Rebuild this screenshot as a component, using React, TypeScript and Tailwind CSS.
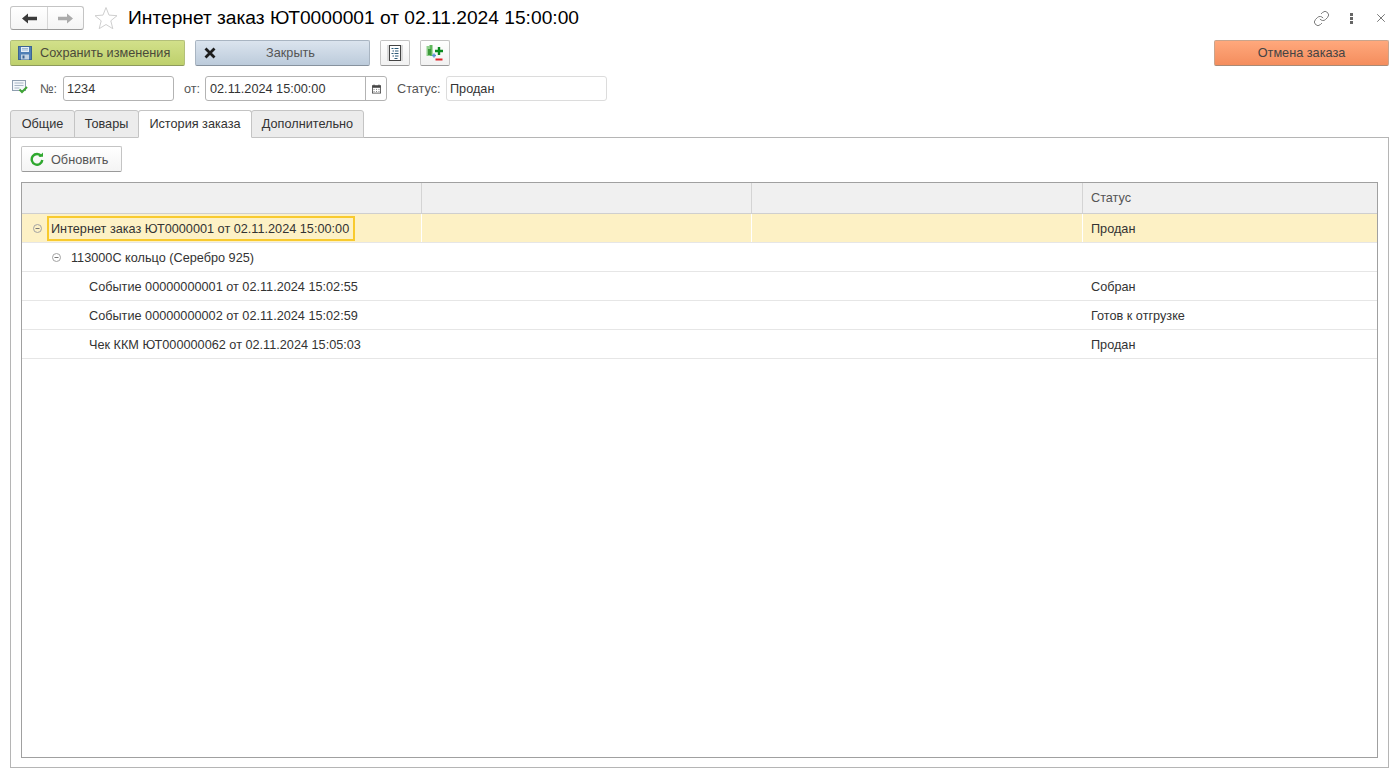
import { Link, X } from 'lucide-react'

const rows = [
  { text: 'Интернет заказ ЮТ0000001 от 02.11.2024 15:00:00', status: 'Продан', level: 0, toggle: true, active: true },
  { text: '113000С кольцо (Серебро 925)', status: '', level: 1, toggle: true, active: false },
  { text: 'Событие 00000000001 от 02.11.2024 15:02:55', status: 'Собран', level: 2, toggle: false, active: false },
  { text: 'Событие 00000000002 от 02.11.2024 15:02:59', status: 'Готов к отгрузке', level: 2, toggle: false, active: false },
  { text: 'Чек ККМ ЮТ000000062 от 02.11.2024 15:05:03', status: 'Продан', level: 2, toggle: false, active: false },
]

const tabs = ['Общие', 'Товары', 'История заказа', 'Дополнительно']
const tabWidths = ['w-[65px]', 'w-[65px]', 'w-[114px]', 'w-[113px]']

function Toggle() {
  return (
    <svg width="9" height="9" viewBox="0 0 9 9" className="shrink-0">
      <circle cx="4.5" cy="4.5" r="4" fill="none" stroke="#a3a3a3" />
      <path d="M2.5 4.5h4" stroke="#777" />
    </svg>
  )
}

function NavArrow({ color, flip }: { color: string; flip?: boolean }) {
  return (
    <svg width="15" height="11" viewBox="0 0 15 11" className={flip ? 'rotate-180' : ''}>
      <path d="M0 5.500L6 0.500V3.800H15V7.200H6V10.500z" fill={color} />
    </svg>
  )
}

function SaveIcon() {
  return (
    <svg width="14" height="14" viewBox="0 0 14 14" className="shrink-0">
      <rect x="0.5" y="0.5" width="13" height="13" fill="#4f7fb5" stroke="#3c6492" />
      <rect x="3" y="1" width="8" height="5" fill="#e6eef6" />
      <path d="M4 2.500h6M4 4h6" stroke="#9db8d3" />
      <rect x="3" y="8.5" width="8" height="5" fill="#c4d3e2" />
      <rect x="4.5" y="9.5" width="2" height="3" fill="#3c6492" />
    </svg>
  )
}

function CloseIcon() {
  return (
    <svg width="12" height="12" viewBox="0 0 12 12" className="shrink-0">
      <path d="M1.5 1.5l9 9M10.5 1.5l-9 9" stroke="#1c1c1c" strokeWidth="2.800" />
    </svg>
  )
}

function StarIcon() {
  return (
    <svg width="24" height="24" viewBox="0 0 24 24">
      <path d="M12 1.5l3 7.6 8 .6-6.200 5.100 2 7.900L12 18.500l-6.800 4.200 2-7.900L1 9.700l8-.6z" fill="none" stroke="#cfcfcf" />
    </svg>
  )
}

function DocIcon() {
  return (
    <svg width="16" height="18" viewBox="0 0 16 18">
      <rect x="0" y="1" width="16" height="16" fill="#d9d9d9" />
      <rect x="2.500" y="1.500" width="11" height="15" fill="#fff" stroke="#444" />
      <path d="M4.500 4.500h2M7.500 4.500h4M5.500 7h1.500M8 7h3.500M4.500 9.500h2M7.500 9.500h4M5.500 12h1.500M8 12h3.500M7.500 14.500h3" stroke="#2c5a78" />
    </svg>
  )
}

function MovementIcon() {
  return (
    <svg width="18" height="18" viewBox="0 0 18 18">
      <rect x="0.500" y="2" width="3" height="10" fill="#8fd08c" />
      <rect x="3.500" y="1" width="3" height="11" fill="#5fb85c" />
      <rect x="2" y="5" width="3" height="6" fill="#3d9a3a" />
      <path d="M6 11.500h4M8 9.500v4" stroke="#5b8fd0" strokeWidth="1.500" />
      <path d="M9 7h8M13 3v8" stroke="#0b8a1e" strokeWidth="2.400" />
      <path d="M9.500 15.500h7" stroke="#e0242a" strokeWidth="2" />
    </svg>
  )
}

function PostedIcon() {
  return (
    <svg width="16" height="14" viewBox="0 0 16 14">
      <rect x="0.500" y="0.500" width="13" height="10" fill="#f4f7fb" stroke="#8f9eb0" />
      <path d="M2.500 3h9M2.500 5.500h9M2.500 8h5" stroke="#a9b6c5" />
      <path d="M7.500 9.500l2.500 2.500 5-5" fill="none" stroke="#3fa535" strokeWidth="2" />
    </svg>
  )
}

function CalendarIcon() {
  return (
    <svg width="9" height="10" viewBox="0 0 11 11">
      <rect x="0.500" y="1.500" width="10" height="9" fill="none" stroke="#444" />
      <rect x="0.500" y="1.500" width="10" height="2.500" fill="#444" />
      <path d="M2.500 0v2M8.500 0v2" stroke="#444" />
      <path d="M2 6h1M5 6h1M8 6h1M2 8.500h1M5 8.500h1M8 8.500h1" stroke="#444" />
    </svg>
  )
}

function RefreshIcon() {
  return (
    <svg width="14" height="14" viewBox="0 0 14 14">
      <path d="M11.300 4.200A5.300 5.300 0 1 0 12.300 8" fill="none" stroke="#2fa82f" strokeWidth="2.400" />
      <path d="M8.500 4.800h4.500V0.500z" fill="#2fa82f" />
    </svg>
  )
}

export default function App() {
  return (
    <div className="w-[1397px] h-[776px] bg-white overflow-hidden flex flex-col pl-[10px] pr-[8px] pt-[6px] text-[12.7px] text-[#333] font-['Liberation_Sans',Arial,sans-serif]">
      <div className="h-[24px] flex items-center shrink-0">
        <div className="w-[74px] h-[24px] flex bg-gradient-to-b from-white to-[#f4f4f4] border border-[#c4c4c4] border-b-[#9a9a9a] rounded-[3px]">
          <div className="w-[37px] flex items-center justify-center border-r border-[#d6d6d6]">
            <NavArrow color="#3a3a3a" />
          </div>
          <div className="flex-1 flex items-center justify-center">
            <NavArrow color="#ababab" flip />
          </div>
        </div>
        <div className="ml-[10px] mr-[10px]">
          <StarIcon />
        </div>
        <div className="text-[19.2px] leading-[24px] text-black whitespace-nowrap">Интернет заказ ЮТ0000001 от 02.11.2024 15:00:00</div>
        <div className="ml-auto flex items-center text-[#666]">
          <Link size={17} strokeWidth={1.200} />
          <div className="ml-[20px] flex flex-col gap-[1px]">
            <div className="w-[3px] h-[3px] bg-[#666]"></div>
            <div className="w-[3px] h-[3px] bg-[#666]"></div>
            <div className="w-[3px] h-[3px] bg-[#666]"></div>
          </div>
          <X size={14} strokeWidth={1.500} className="ml-[21px] mr-[1px]" />
        </div>
      </div>

      <div className="mt-[10px] h-[26px] flex items-stretch shrink-0">
        <button className="w-[175px] flex items-center pl-[7px] gap-[8px] rounded-[2px] border border-[#b3c07a] border-b-[#8d9a5c] bg-gradient-to-b from-[#d2e08a] to-[#bed06c] text-[#4a4a3a]">
          <SaveIcon />
          <span className="pt-[2px]">Сохранить изменения</span>
        </button>
        <button className="ml-[10px] w-[175px] relative flex items-center justify-center pl-[16px] rounded-[2px] border border-[#a9b5c2] border-b-[#87929e] bg-gradient-to-b from-[#dbe4ee] to-[#bccbdb] text-[#555]">
          <span className="absolute left-[8px] top-[6px]">
            <CloseIcon />
          </span>
          <span className="pt-[2px]">Закрыть</span>
        </button>
        <button className="ml-[10px] w-[30px] flex items-center justify-center rounded-[2px] border border-[#c4c4c4] border-b-[#9a9a9a] bg-gradient-to-b from-white to-[#f1f1f1]">
          <DocIcon />
        </button>
        <button className="ml-[10px] w-[30px] flex items-center justify-center rounded-[2px] border border-[#c4c4c4] border-b-[#9a9a9a] bg-gradient-to-b from-white to-[#f1f1f1]">
          <MovementIcon />
        </button>
        <button className="ml-auto w-[175px] pt-[2px] flex items-center justify-center rounded-[2px] border border-[#c9a48c] border-b-[#a98a76] bg-gradient-to-b from-[#ffa87c] to-[#f48d5d] text-[#444]">
          Отмена заказа
        </button>
      </div>

      <div className="mt-[10px] h-[25px] flex items-center shrink-0">
        <div className="w-[30px] pl-[2px] -mt-[4px]">
          <PostedIcon />
        </div>
        <span className="text-[#555] w-[23px] pt-[2px]">№:</span>
        <div className="w-[111px] h-[25px] flex items-center px-[3px] pt-[2px] border border-[#b3b3b3] rounded-[3px]">1234</div>
        <span className="ml-[10px] w-[21px] pt-[2px] text-[#555]">от:</span>
        <div className="w-[182px] h-[25px] flex items-center border border-[#b3b3b3] rounded-[3px]">
          <span className="flex-1 px-[4px] pt-[2px]">02.11.2024 15:00:00</span>
          <span className="w-[21px] h-full flex items-center justify-center border-l border-[#b3b3b3]">
            <CalendarIcon />
          </span>
        </div>
        <span className="ml-[10px] w-[49px] pt-[2px] text-[#555]">Статус:</span>
        <div className="w-[161px] h-[25px] flex items-center px-[3px] pt-[2px] border border-[#dcdcdc] rounded-[3px]">Продан</div>
      </div>

      <div className="mt-[9px] h-[28px] flex items-stretch shrink-0 relative z-10">
        {tabs.map((t, i) => (
          <div
            key={t}
            className={`${tabWidths[i]} pt-[2px] flex items-center justify-center rounded-t-[3px] border border-[#c4c4c4] -mr-[1px] ${
              i === 2 ? 'bg-white border-b-white z-10' : 'bg-[#ececec]'
            }`}
          >
            {t}
          </div>
        ))}
      </div>

      <div className="-mt-[1px] w-[1379px] h-[631px] shrink-0 border border-[#b5b5b5] px-[10px] pt-[8px] flex flex-col">
        <button className="w-[101px] h-[26px] shrink-0 flex items-center pl-[8px] gap-[7px] rounded-[2px] border border-[#c4c4c4] border-b-[#9a9a9a] bg-gradient-to-b from-white to-[#f4f4f4] text-[#555]">
          <RefreshIcon />
          <span className="pt-[3px]">Обновить</span>
        </button>

        <div className="mt-[10px] w-[1357px] h-[576px] border border-[#a0a0a0]">
          <div className="h-[31px] flex bg-[#f0f0f0] border-b border-[#cfcfcf]">
            <div className="w-[400px] border-r border-[#d4d4d4]"></div>
            <div className="w-[330px] border-r border-[#d4d4d4]"></div>
            <div className="w-[331px] border-r border-[#d4d4d4]"></div>
            <div className="flex-1 flex items-center pl-[8px] pt-[2px] text-[#555]">Статус</div>
          </div>
          {rows.map(r => (
            <div
              key={r.text}
              className={`h-[29px] flex border-b border-[#e6e6e6] ${r.active ? 'bg-[#fdf1c5]' : 'bg-white'}`}
            >
              <div className={`w-[400px] flex items-center ${r.active ? 'border-r border-white pl-[11px]' : ''} ${r.level === 1 ? 'pl-[30px]' : ''} ${r.level === 2 ? 'pl-[67px]' : ''}`}>
                {r.toggle && <Toggle />}
                {r.active ? (
                  <span className="ml-[5px] h-[25px] w-[308px] flex items-center pl-[2px] pt-[3px] border-2 border-[#f8ca2e] whitespace-nowrap">{r.text}</span>
                ) : (
                  <span className={`whitespace-nowrap pt-[3px] ${r.toggle ? 'ml-[10px]' : ''}`}>{r.text}</span>
                )}
              </div>
              <div className={`w-[330px] ${r.active ? 'border-r border-white' : ''}`}></div>
              <div className={`w-[331px] ${r.active ? 'border-r border-white' : ''}`}></div>
              <div className="flex-1 pt-[3px] flex items-center pl-[8px]">{r.status}</div>
            </div>
          ))}
        </div>
      </div>
    </div>
  )
}
